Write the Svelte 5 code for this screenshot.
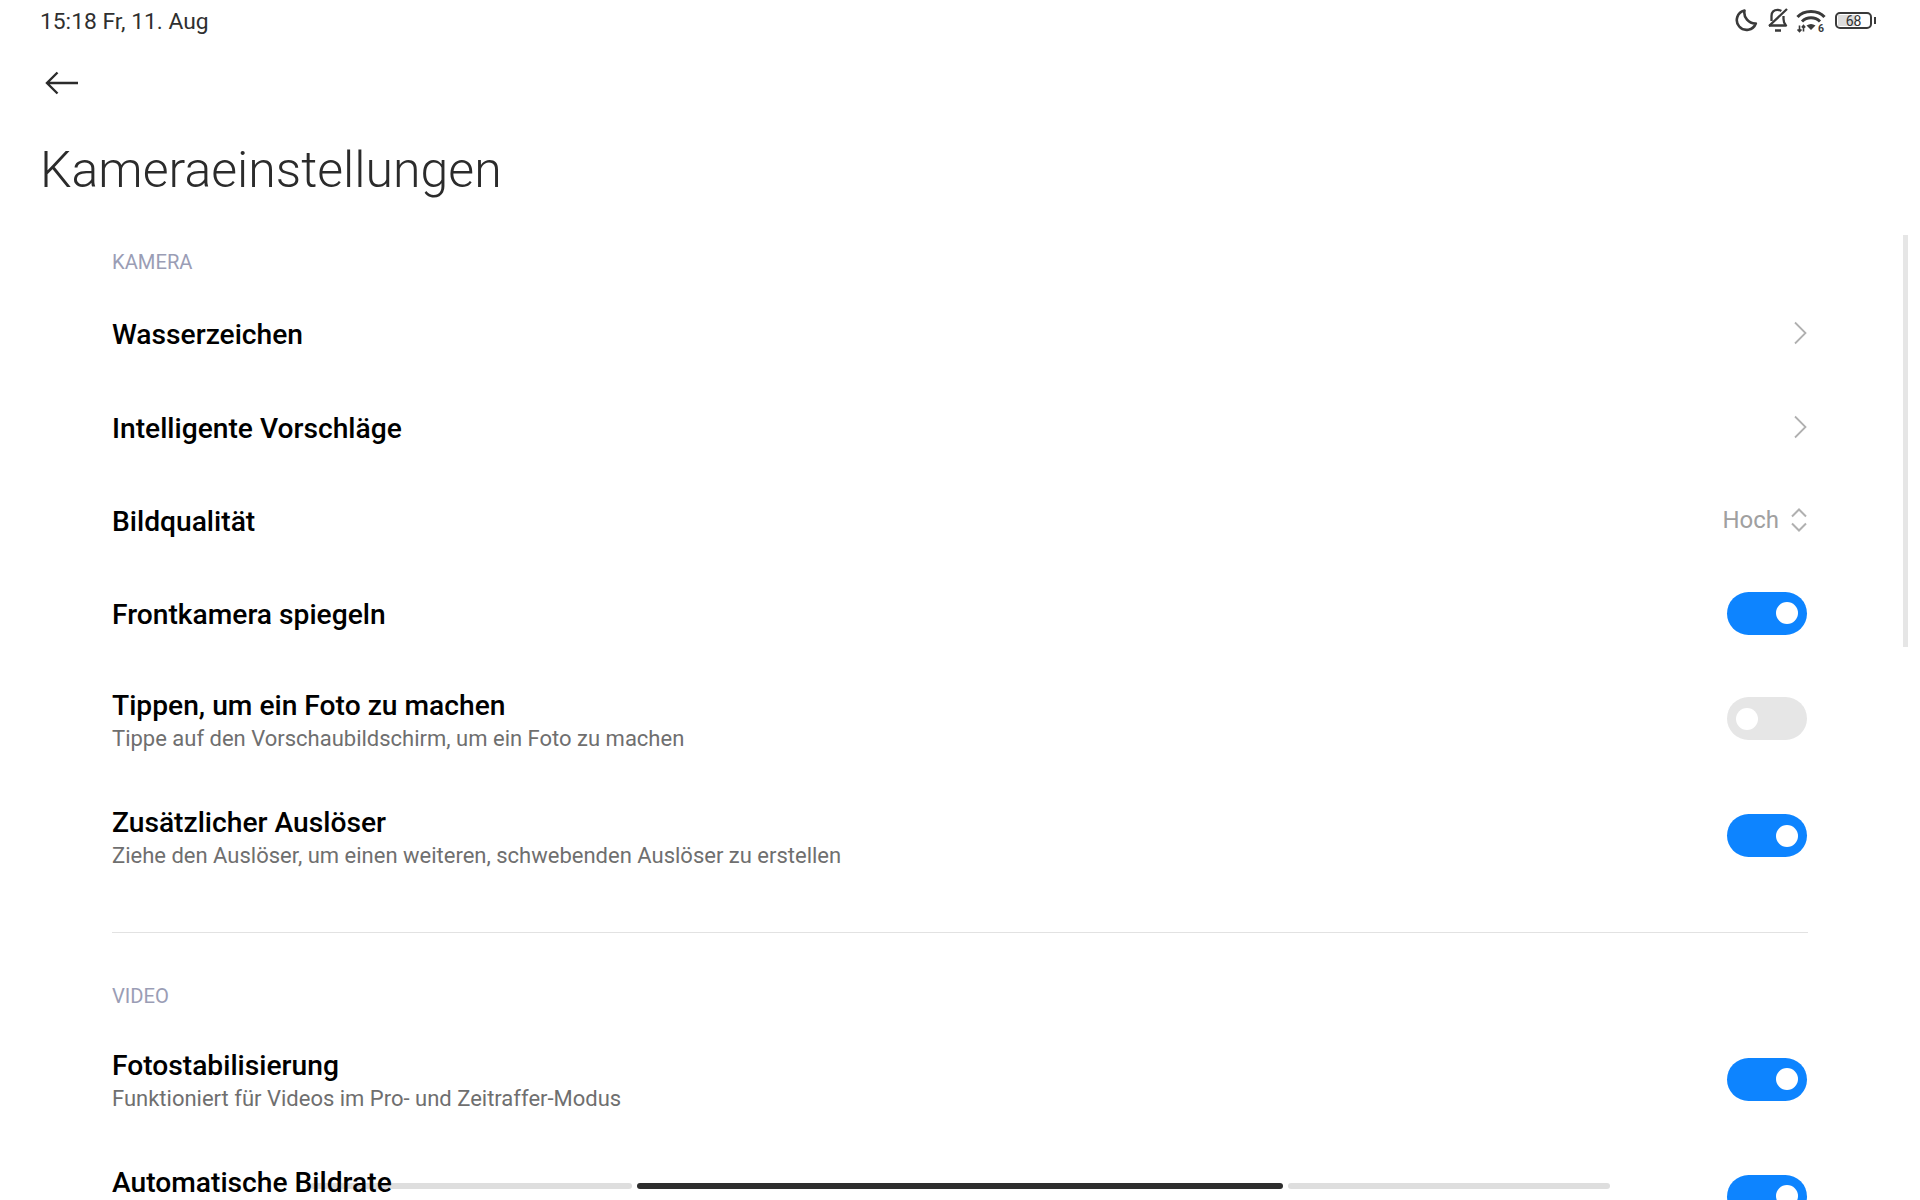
<script>
	const cameraRows = [
		{ title: 'Wasserzeichen', type: 'link' },
		{ title: 'Intelligente Vorschläge', type: 'link' },
		{ title: 'Bildqualität', type: 'select', value: 'Hoch' },
		{ title: 'Frontkamera spiegeln', type: 'toggle', on: true },
		{
			title: 'Tippen, um ein Foto zu machen',
			sub: 'Tippe auf den Vorschaubildschirm, um ein Foto zu machen',
			type: 'toggle',
			on: false
		},
		{
			title: 'Zusätzlicher Auslöser',
			sub: 'Ziehe den Auslöser, um einen weiteren, schwebenden Auslöser zu erstellen',
			type: 'toggle',
			on: true
		}
	];

	// the last row runs off the bottom of the screen, so only its title shows
	const videoRows = [
		{
			title: 'Fotostabilisierung',
			sub: 'Funktioniert für Videos im Pro- und Zeitraffer-Modus',
			type: 'toggle',
			on: true
		},
		{ title: 'Automatische Bildrate', type: 'toggle', on: true, cut: true }
	];
</script>

{#snippet row(item)}
	<div class="row" class:double={item.sub || item.cut}>
		<div class="text" class:cut={item.cut}>
			<div class="title">{item.title}</div>
			{#if item.sub}
				<div class="sub">{item.sub}</div>
			{/if}
		</div>
		{#if item.type === 'link'}
			<svg class="chevron" width="14" height="24" viewBox="0 0 14 24">
				<path d="M2 1.500 12.500 12 2 22.500" fill="none" stroke="#b0b0b0" stroke-width="1.800" />
			</svg>
		{:else if item.type === 'select'}
			<div class="select">
				<span>{item.value}</span>
				<svg width="18" height="26" viewBox="0 0 18 26">
					<path d="M2 9.500 9 2.500l7 7M2 16.500l7 7 7-7" fill="none" stroke="#b0b0b0" stroke-width="2" />
				</svg>
			</div>
		{:else}
			<div class="switch" class:on={item.on}><div class="knob"></div></div>
		{/if}
	</div>
{/snippet}

<div class="screen">
	<header class="status">
		<span class="time">15:18 Fr, 11. Aug</span>
		<div class="icons">
			<svg width="24" height="24" viewBox="0 0 24 24">
				<path d="M10.500 2.500A9.800 9.800 0 1 0 21.800 15.500 11 11 0 0 1 10.500 2.500Z" fill="none" stroke="#3a3a3a" stroke-width="2.600" stroke-linejoin="round" />
			</svg>
			<svg width="24" height="24" viewBox="0 0 24 24">
				<path d="M6.500 13V8C6.500 4 9 1.800 12.500 1.800c1.500 0 2.800.4 3.800 1.200M18.500 8v3c0 3 1 5 2.500 6.500H4" fill="none" stroke="#3a3a3a" stroke-width="2.300" stroke-linejoin="round" />
				<path d="M22 1 4 18M10 22.500h6" fill="none" stroke="#3a3a3a" stroke-width="2.300" />
			</svg>
			<svg class="wifi" width="30" height="24" viewBox="0 0 30 24">
				<path d="M1.500 9C8 1.500 22 1.500 28.500 9M6 13.500C11 8.500 19 8.500 24 13.500" fill="none" stroke="#3a3a3a" stroke-width="3" />
				<path d="M15 22l-4.500-4.500c3-2 6-2 9 0Z" fill="#3a3a3a" />
				<path d="M3.500 17.500v6M1.500 21.500l2 2 2-2M7.500 23.500v-6M5.800 19.500l1.700-2 1.700 2" fill="none" stroke="#3a3a3a" stroke-width="1.600" />
				<text x="22" y="23.500" font-size="10.500" font-weight="700" fill="#3a3a3a">6</text>
			</svg>
			<div class="battery">
				<div class="shell">
					<div class="fill"></div>
					<span>68</span>
				</div>
				<div class="cap"></div>
			</div>
		</div>
	</header>

	<svg class="back" width="34" height="24" viewBox="0 0 34 24">
		<path d="M33 12H2M12.500 1.500 2 12l10.500 10.500" fill="none" stroke="#2b2b2b" stroke-width="2.400" />
	</svg>

	<h1>Kameraeinstellungen</h1>

	<main class="content">
		<section>
			<div class="label">KAMERA</div>
			{#each cameraRows as item}
				{@render row(item)}
			{/each}
		</section>
		<hr />
		<section>
			<div class="label">VIDEO</div>
			{#each videoRows as item}
				{@render row(item)}
			{/each}
		</section>
	</main>

	<div class="scrollbar"></div>
	<div class="pager">
		<div class="seg side"></div>
		<div class="seg active"></div>
		<div class="seg side"></div>
	</div>
</div>

<style>
	:global(body) {
		background: #fff;
	}

	.screen {
		position: relative;
		width: 1920px;
		height: 1200px;
		overflow: hidden;
		background: #fff;
		font-family: Roboto, 'Liberation Sans', sans-serif;
	}

	.status {
		display: flex;
		justify-content: space-between;
		align-items: center;
		height: 42px;
		padding: 0 44px 0 40px;
	}

	.time {
		font-size: 22.800px;
		color: #2f2f2f;
	}

	.icons {
		display: flex;
		align-items: center;
		gap: 7px;
		padding-bottom: 2px;
	}

	.wifi {
		overflow: visible;
	}

	.battery {
		display: flex;
		align-items: center;
		gap: 2px;
		margin-left: 2px;
	}

	.shell {
		position: relative;
		width: 33px;
		height: 13px;
		border: 2px solid #3a3a3a;
		border-radius: 5px;
		overflow: hidden;
	}

	.fill {
		position: absolute;
		inset: 1px auto 1px 1px;
		width: 18px;
		background: #dcdcdc;
	}

	.shell span {
		position: absolute;
		inset: 0;
		text-align: center;
		font-size: 14px;
		line-height: 14px;
		color: #333;
	}

	.cap {
		width: 2px;
		height: 7px;
		background: #3a3a3a;
	}

	.back {
		display: block;
		margin: 29px 0 0 45px;
	}

	h1 {
		margin: 42px 0 0 40px;
		font-size: 50px;
		font-weight: 300;
		line-height: 66px;
		color: #2b2b2b;
	}

	.content {
		position: relative;
		z-index: 1;
		margin-top: 47px;
		padding: 0 112px 0 112px;
	}

	.label {
		font-size: 20.200px;
		line-height: 24px;
		color: #9a9db5;
		margin-bottom: 12.500px;
	}

	.row {
		display: flex;
		align-items: center;
		justify-content: space-between;
		height: 93.400px;
	}

	.row.double {
		height: 117px;
	}

	.text {
		padding-top: 4px;
	}

	.double .text.cut {
		padding-top: 0;
		padding-bottom: 26px;
	}

	.title {
		font-size: 28.200px;
		font-weight: 500;
		line-height: 36px;
		color: #000;
	}

	.sub {
		font-size: 22px;
		line-height: 30px;
		color: #6f6f6f;
	}

	.chevron {
		margin-right: 1px;
	}

	.select {
		display: flex;
		align-items: center;
		gap: 11px;
		font-size: 24px;
		color: #a0a0a0;
	}

	.switch {
		display: flex;
		align-items: center;
		width: 80px;
		height: 43px;
		margin-right: 1px;
		padding: 0 9px;
		box-sizing: border-box;
		border-radius: 22px;
		background: #e6e6e6;
	}

	.switch.on {
		justify-content: flex-end;
		background: #0d84ff;
	}

	.knob {
		width: 22px;
		height: 22px;
		border-radius: 50%;
		background: #fff;
	}

	hr {
		margin: 38px 0 51px;
		border: 0;
		height: 1px;
		background: #e2e2e2;
	}

	.scrollbar {
		position: absolute;
		top: 235px;
		right: 12px;
		width: 5px;
		height: 412px;
		background: #e6e6e6;
	}

	.pager {
		position: absolute;
		left: 310px;
		bottom: 11px;
		display: flex;
		gap: 5px;
	}

	.seg {
		height: 6px;
		border-radius: 3px;
	}

	.side {
		width: 322px;
		background: #dedede;
	}

	.active {
		width: 646px;
		background: #2e2e2e;
	}
</style>
